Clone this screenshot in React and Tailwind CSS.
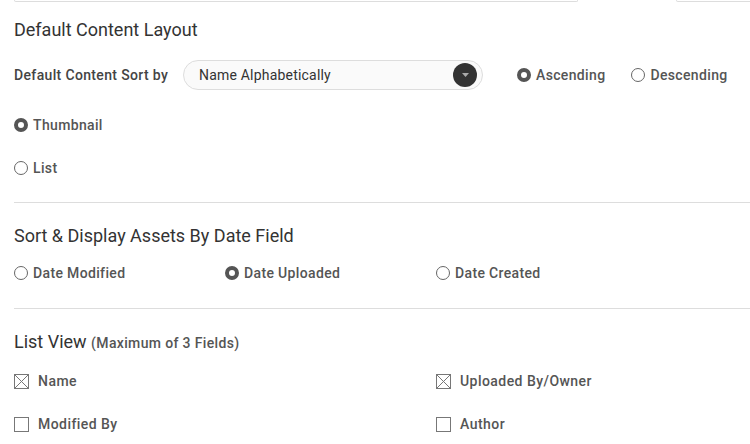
import React from "react";

function Radio({ checked, label }) {
  return (
    <div className="flex items-center h-[20px]">
      {checked ? (
        <span className="h-[14px] w-[14px] rounded-full border-[4px] border-[#555] bg-white shrink-0" />
      ) : (
        <span className="h-[14px] w-[14px] rounded-full border border-[#666] bg-white shrink-0" />
      )}
      <span className="ml-[5px] text-[14px] tracking-[0.35px] font-medium text-[#555] whitespace-nowrap">{label}</span>
    </div>
  );
}

function Check({ checked, label }) {
  return (
    <div className="flex items-center h-[20px]">
      <svg width="15" height="15" viewBox="0 0 15 15" className="shrink-0">
        <rect x="0.5" y="0.5" width="14" height="14" fill="white" stroke="#777" />
        {checked && (
          <>
            <line x1="1" y1="1" x2="14" y2="14" stroke="#777" />
            <line x1="14" y1="1" x2="1" y2="14" stroke="#777" />
          </>
        )}
      </svg>
      <span className="ml-[9px] text-[14px] tracking-[0.45px] font-medium text-[#555] whitespace-nowrap">{label}</span>
    </div>
  );
}

export default function App() {
  return (
    <div className="w-[750px] h-[444px] overflow-hidden bg-white font-['Roboto','Liberation_Sans',sans-serif]">
      <div className="w-[858px] pl-[14px]">
        {/* bottoms of the fields above */}
        <div className="flex h-[2px]">
          <div className="w-[564px] shrink-0 border-x border-b border-[#ddd] rounded-b-[3px]" />
          <div className="ml-[98px] w-[200px] shrink-0 border-x border-b border-[#ddd] rounded-b-[3px]" />
        </div>

        <h2 className="mt-[16px] text-[18px] leading-[24px] text-[#333]">Default Content Layout</h2>

        <div className="mt-[18px] flex items-center h-[30px]">
          <span className="w-[155px] shrink-0 text-[14px] tracking-[0.35px] font-medium text-[#444] whitespace-nowrap">
            Default Content Sort by
          </span>
          <div className="ml-[14px] w-[300px] shrink-0 h-[30px] rounded-full border border-[#ddd] bg-[#fafafa] flex items-center pl-[15px] pr-[5px]">
            <span className="flex-1 text-[14px] tracking-[0.2px] text-[#333]">Name Alphabetically</span>
            <span className="h-[24px] w-[24px] rounded-full bg-[#333] flex items-center justify-center">
              <svg width="7" height="4" viewBox="0 0 7 4">
                <path d="M0 0h7L3.5 4z" fill="#aaa" />
              </svg>
            </span>
          </div>
          <div className="ml-[34px]">
            <Radio checked label="Ascending" />
          </div>
          <div className="ml-[26px]">
            <Radio label="Descending" />
          </div>
        </div>

        <div className="mt-[25px]">
          <Radio checked label="Thumbnail" />
        </div>
        <div className="mt-[23px]">
          <Radio label="List" />
        </div>

        <div className="mt-[24px] border-t border-[#ddd]" />

        <h2 className="mt-[21px] text-[18px] leading-[24px] text-[#333]">Sort &amp; Display Assets By Date Field</h2>
        <div className="mt-[15px] grid grid-cols-[211px_211px_211px]">
          <Radio label="Date Modified" />
          <Radio checked label="Date Uploaded" />
          <Radio label="Date Created" />
        </div>

        <div className="mt-[25px] border-t border-[#ddd]" />

        <h2 className="mt-[21px] text-[18px] leading-[24px] text-[#333]">
          List View{" "}
          <span className="text-[14px] tracking-[0.35px] font-medium text-[#555]">(Maximum of 3 Fields)</span>
        </h2>
        <div className="mt-[16px] grid grid-cols-[422px_1fr] gap-y-[23px]">
          <Check checked label="Name" />
          <Check checked label="Uploaded By/Owner" />
          <Check label="Modified By" />
          <Check label="Author" />
        </div>
      </div>
    </div>
  );
}
